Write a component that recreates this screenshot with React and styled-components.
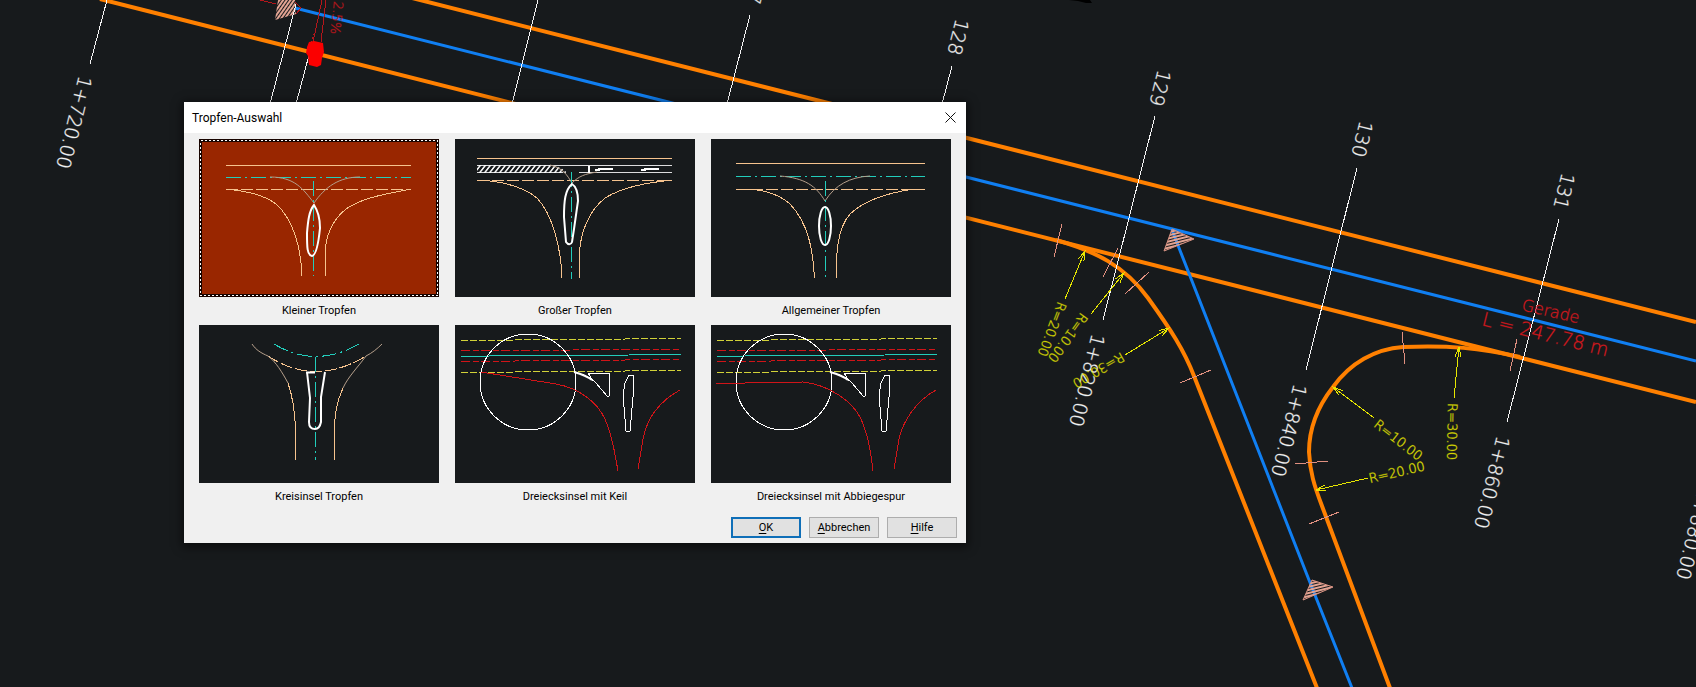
import React, { useState } from "react";
import styled, { createGlobalStyle } from "styled-components";

const GlobalStyle = createGlobalStyle`
  * {
    box-sizing: border-box;
  }
  body {
    margin: 0;
    background-color: #171a1c;
  }
`;

const Workspace = styled.main`
  position: relative;
  width: 100%;
  min-height: 100vh;
  overflow: hidden;
  background-color: #171a1c;
`;

const Plan = styled.svg`
  display: block;
  width: 100%;
  height: 100vh;

  .edge {
    fill: none;
    stroke: #ff8000;
    stroke-width: 4;
  }
  .axis {
    fill: none;
    stroke: #107ff2;
    stroke-width: 3;
  }
  .station,
  .tick,
  .radius,
  .red {
    fill: none;
    stroke-width: 1;
    shape-rendering: crispEdges;
  }
  .station {
    stroke: #f4f4f4;
  }
  .tick {
    stroke: #e09080;
  }
  .radius {
    stroke: #e6e600;
  }
  .red {
    stroke: #b3161b;
  }
`;

const PlanText = styled.text`
  font-family: "DejaVu Sans", sans-serif;
  font-weight: 200;
  font-size: ${(props) => props.$size}px;
  fill: ${(props) => props.$color};
  stroke: ${(props) => props.$color};
  stroke-width: 1;
  stroke-opacity: 0.35;
`;

const Dialog = styled.section`
  position: absolute;
  left: 184px;
  top: 102px;
  background-color: #f0f0f0;
  box-shadow: 0 2px 9px 2px rgba(0, 0, 0, 0.55);
  font-family: Roboto, sans-serif;
  color: #000;
`;

const TitleBar = styled.header`
  display: flex;
  align-items: center;
  justify-content: space-between;
  height: 31px;
  padding-left: 8px;
  background-color: #fff;

  h1 {
    margin: 0;
    font-size: 12px;
    font-weight: 400;
  }
`;

const CloseButton = styled.button`
  display: flex;
  align-items: center;
  justify-content: center;
  width: 31px;
  height: 28px;
  padding: 0;
  border: none;
  background: none;

  svg {
    width: 11px;
    height: 11px;
    stroke: #111;
  }
`;

const Choices = styled.div`
  display: grid;
  grid-template-columns: repeat(3, 240px);
  column-gap: 16px;
  padding: 6px 15px 0;
`;

const Choice = styled.button`
  display: flex;
  flex-direction: column;
  padding: 0;
  border: none;
  background: none;
  font: inherit;
  font-size: 11px;
  line-height: 28px;
  text-align: center;
  color: inherit;
  outline: none;

  span {
    width: 100%;
  }
`;

const Preview = styled.svg`
  display: block;
  width: 240px;
  height: 158px;
  background-color: ${(props) => (props.$selected ? "#992600" : "#171a1c")};
  fill: none;

  .frame {
    stroke: #180400;
    stroke-width: 3;
  }
  .dots {
    stroke: #fff;
    stroke-dasharray: 2 2;
    shape-rendering: crispEdges;
  }
  .peach {
    stroke: #f6c38e;
  }
  .soft {
    stroke: #b59f8b;
  }
  .cyan {
    stroke: #22cdbb;
  }
  .dashed {
    stroke-dasharray: 12 3;
  }
  .dashdot {
    stroke-dasharray: 15 4 2 4;
  }
  .yellow {
    stroke: #d2d238;
    stroke-dasharray: 7 2;
  }
  .red {
    stroke: #d01418;
  }
  .reddash {
    stroke: #d01418;
    stroke-dasharray: 9 3 6 2;
  }
  .white {
    stroke: #fff;
  }
  .bold {
    stroke: #fff;
    stroke-width: 2;
  }
  .peach,
  .cyan,
  .yellow,
  .red,
  .reddash,
  .white {
    shape-rendering: crispEdges;
  }
`;

const Actions = styled.footer`
  display: flex;
  justify-content: flex-end;
  gap: 8px;
  padding: 6px 9px 5px;
`;

const ActionButton = styled.button`
  width: 70px;
  height: 21px;
  padding: 0;
  border: ${(props) => (props.$primary ? "2px solid #0f6fb8" : "1px solid #adadad")};
  background-color: #e1e1e1;
  font: inherit;
  font-size: 11px;
  line-height: 17px;
  color: inherit;

  u {
    text-underline-offset: 2px;
  }
`;

const DROP_JUNCTION = (
  <>
    <path className="peach" d="M27 26.5H212" />
    <path className="cyan dashdot" d="M27 38.5H212" />
    <path className="peach dashed" d="M27 50.5H212" />
    <path className="peach" d="M27 50C45 52 64 55 77 65C95 81 102 110 103 137" />
    <path className="peach" d="M212 50C190 55 166 57 147 70C133 81 126 98 126 116V137" />
    <path className="soft" d="M71 38C96 38 104 50 115 64C126 48 140 38 161 38" />
    <path className="cyan dashdot" d="M114.500 42V137" />
    <path className="bold" d="M115 66C119 72 121 80 121 89C120 99 118 116 113 117C108 116 108 108 108 94C109 82 110 72 115 66Z" />
  </>
);

const LARGE_DROP = (
  <>
    <defs>
      <pattern id="bars" width="5" height="8" patternUnits="userSpaceOnUse" patternTransform="skewX(-38)">
        <rect width="2" height="8" fill="#f2f2f2" />
      </pattern>
    </defs>
    <path fill="url(#bars)" d="M22 26H95C103 27 109 30 112 34H22Z" />
    <path className="peach" d="M22 19.500H217" />
    <path className="white" strokeOpacity="0.85" d="M22 26.500H217M22 33.500H108M124 33.500H217" />
    <path className="peach dashed" d="M22 41.500H217" />
    <path className="peach" d="M22 41C45 42 66 46 82 59C98 76 106 110 107 139" />
    <path className="peach" d="M217 41C190 44 168 48 150 59C134 72 124 94 124.500 120V139" />
    <path className="soft" d="M95 26C108 29 112 36 117 44C124 37 130 35 142 33" />
    <path className="cyan dashdot" d="M116.500 33V140" />
    <path className="bold" d="M117 45C122 48 123 55 123 62L119 90L117 103C116 106 113 106 111 103L109 78C109 62 110 51 117 45Z" />
    <path className="bold" d="M134 27V34" />
    <path className="bold" d="M140 31H144V30H158M186 31H190V30H204" />
  </>
);

const GENERAL_DROP = (
  <>
    <path className="peach" d="M25 24.500H214" />
    <path className="cyan dashdot" d="M25 37.500H214" />
    <path className="peach dashed" d="M25 50.500H214" />
    <path className="peach" d="M25 50.500H42C57 52 69 56 79 65C97 84 102 110 103.500 139" />
    <path className="peach" d="M214 50.500H200C177 54 154 61 139 75C126 90 125 115 125.500 139" />
    <path className="soft" d="M69 37C94 39 105 47 114 62C124 46 139 38 159 37" />
    <path className="cyan dashdot" d="M114.500 42V139" />
    <ellipse className="bold" cx="114" cy="87" rx="6" ry="19" />
  </>
);

const ROUNDABOUT_DROP = (
  <>
    <path className="cyan dashdot" d="M75 19Q116 44 160 19" />
    <path className="peach dashed" d="M69 31Q116 62 167 31" />
    <path className="soft" d="M53 19C57 25 62 28 69 31C77 37 83 47 89 58" />
    <path className="soft" d="M183 19C178 24 173 28 167 31C159 42 149 52 144 63" />
    <path className="peach" d="M89 58C93 70 96 86 96.500 104V135" />
    <path className="peach" d="M144 63C138 76 135 90 135.500 108V135" />
    <path className="cyan dashdot" d="M116.500 32V135" />
    <path className="bold" d="M107 47.500H116M126 47L122 72V97C121 102 119 104 116 104C112 104 110 101 110 97L111 73L108 47" />
  </>
);

const TRIANGLE_BASE = (
  <>
    <path className="yellow" d="M6 15.500L226 13.500M6 47.500L226 45.500" />
    <path className="reddash" d="M6 25.500L226 24.500M6 36.500L226 34.500" />
    <path className="cyan" d="M6 31.500L62 30.500H122L226 29.500" />
    <circle className="white" cx="73" cy="57" r="48" />
    <path className="white" d="M119 47C128 49 137 53 141 58L152 71H154L155 48L133 48L138 56" />
    <path className="bold" d="M119 47C126 49 132 51 137 55" />
    <path className="white" d="M174 50H178L179 61L175 106H171L168 70L170 58Z" />
  </>
);

const WEDGE_ISLAND = (
  <>
    {TRIANGLE_BASE}
    <path className="red" d="M26 47L101 59C124 63 142 77 150 94C158 112 160 130 163 146" />
    <path className="red" d="M225 65C205 76 192 93 188 114L183 144" />
  </>
);

const LANE_ISLAND = (
  <>
    {TRIANGLE_BASE}
    <path className="red" d="M5 58.500L92 57C119 60 142 77 150 94C158 112 160 130 162 146" />
    <path className="red" d="M225 65C205 76 192 96 188 114L183 144" />
  </>
);

const CHOICES = [
  { name: "Kleiner Tropfen", art: DROP_JUNCTION },
  { name: "Großer Tropfen", art: LARGE_DROP },
  { name: "Allgemeiner Tropfen", art: GENERAL_DROP },
  { name: "Kreisinsel Tropfen", art: ROUNDABOUT_DROP },
  { name: "Dreiecksinsel mit Keil", art: WEDGE_ISLAND },
  { name: "Dreiecksinsel mit Abbiegespur", art: LANE_ISLAND },
];

// x, y, angle, text
const STATIONS = [
  [755, -33, 104, "127"],
  [956, 18, 104, "128"],
  [1158, 69, 104, "129"],
  [1360, 120, 104, "130"],
  [1562, 172, 104, "131"],
  [79, 75, 104, "1+720.00"],
  [1092, 333, 104, "1+820.00"],
  [1294, 383, 104, "1+840.00"],
  [1497, 435, 104, "1+860.00"],
  [1699, 486, 104, "1+880.00"],
];

const CROSS_LINES = [
  [107, 0, 90, 64],
  [296, 4, 270, 104],
  [309, 55, 296, 104],
  [538, 0, 512, 104],
  [750, 15, 727, 104],
  [952, 66, 942, 104],
  [1155, 116, 1103, 320],
  [1357, 168, 1306, 370],
  [1559, 219, 1507, 422],
];

const TICKS = [
  [1062, 224, 1054, 257],
  [1118, 248, 1103, 277],
  [1149, 272, 1125, 294],
  [1211, 370, 1180, 383],
  [1402, 332, 1405, 364],
  [1517, 339, 1510, 371],
  [1295, 464, 1328, 461],
  [1309, 524, 1339, 512],
];

// tip, tail, then the label position and angle
const RADII = [
  { tip: [1085, 251], tail: [1065, 299], at: [1058, 301], angle: 111, text: "R=20.00" },
  { tip: [1124, 273], tail: [1091, 314], at: [1081, 312], angle: 126, text: "R=10.00" },
  { tip: [1169, 328], tail: [1125, 355], at: [1121, 352], angle: 150, text: "R=30.00" },
  { tip: [1333, 387], tail: [1374, 418], at: [1373, 426], angle: 38, text: "R=10.00" },
  { tip: [1316, 490], tail: [1368, 478], at: [1370, 483], angle: -13, text: "R=20.00" },
  { tip: [1459, 347], tail: [1454, 398], at: [1448, 403], angle: 91, text: "R=30.00" },
];

const Label = ({ x, y, angle, size, color, children }) => (
  <PlanText $size={size} $color={color} transform={`translate(${x} ${y}) rotate(${angle})`}>
    {children}
  </PlanText>
);

const Radius = ({ tip, tail, at, angle, text }) => {
  const heading = (Math.atan2(tail[1] - tip[1], tail[0] - tip[0]) * 180) / Math.PI;
  return (
    <g>
      <line className="radius" x1={tip[0]} y1={tip[1]} x2={tail[0]} y2={tail[1]} />
      <path
        className="radius"
        d="M10 -3L0 0L10 3"
        transform={`translate(${tip[0]} ${tip[1]}) rotate(${heading})`}
      />
      <Label x={at[0]} y={at[1]} angle={angle} size={13} color="#e6e600">
        {text}
      </Label>
    </g>
  );
};

const SitePlan = () => (
  <Plan viewBox="0 0 1696 687" preserveAspectRatio="xMinYMin slice" role="img" aria-label="Lageplan">
    <defs>
      <pattern id="hatch" width="3" height="3" patternUnits="userSpaceOnUse" patternTransform="rotate(-14)">
        <rect width="3" height="2" fill="#e2a392" />
      </pattern>
      <pattern id="hatchSteep" width="3" height="3" patternUnits="userSpaceOnUse" patternTransform="rotate(-55)">
        <rect width="3" height="2" fill="#e2a392" />
      </pattern>
    </defs>
    <path fill="#000" d="M1069 0H1090L1092 3H1086L1078 1Z" />
    <path className="edge" d="M412 -2L1696 322" />
    <path className="edge" d="M100 -1L1696 402" />
    <path className="axis" d="M295 8L1696 361" />
    <path className="edge" d="M1056 240C1095 251 1125 266 1148 298C1171 330 1184 350 1194 376L1317 688" />
    <path
      className="edge"
      d="M1520 357C1480 348 1448 345 1403 347C1375 349 1350 363 1333 387C1315 410 1309 432 1309 452C1310 472 1314 485 1322 506L1390 688"
    />
    <path className="axis" d="M1172 230L1309 580L1352 688" />
    <path fill="url(#hatch)" stroke="#d99383" d="M1172 229L1194 239L1164 251Z" />
    <path fill="url(#hatch)" stroke="#d99383" d="M1312 580L1333 587L1303 600Z" />
    <path fill="url(#hatchSteep)" d="M278 0H295L296 14L275 20Z" />
    {CROSS_LINES.map(([x1, y1, x2, y2]) => (
      <line key={x1} className="station" x1={x1} y1={y1} x2={x2} y2={y2} />
    ))}
    {TICKS.map(([x1, y1, x2, y2]) => (
      <line key={x1} className="tick" x1={x1} y1={y1} x2={x2} y2={y2} />
    ))}
    <path className="red" d="M256 -1L276 4M322 0L313 42M326 0L321 42M295 2L301 8L296 14" />
    <path className="red" strokeDasharray="2 2" d="M317 26L311 42" />
    <path fill="#fb0000" d="M309 42L314 41L323 43L324 52L322 58L321 65L317 67L309 65L308 56L306 53L307 47Z" />
    {STATIONS.map(([x, y, angle, text]) => (
      <Label key={text} x={x} y={y} angle={angle} size={19} color="#f4f4f4">
        {text}
      </Label>
    ))}
    {RADII.map((radius) => (
      <Radius key={radius.tip[0]} {...radius} />
    ))}
    <Label x={334} y={1} angle={96} size={13} color="#c8161b">2.5%</Label>
    <Label x={1521} y={310} angle={13} size={16} color="#d8181c">Gerade</Label>
    <Label x={1481} y={325} angle={14} size={19} color="#d8181c">L = 247.78 m</Label>
  </Plan>
);

const App = () => {
  const [selected, setSelected] = useState(0);

  return (
    <Workspace>
      <GlobalStyle />
      <SitePlan />
      <Dialog role="dialog" aria-labelledby="dialog-title">
        <TitleBar>
          <h1 id="dialog-title">Tropfen-Auswahl</h1>
          <CloseButton aria-label="Schließen">
            <svg viewBox="0 0 11 11">
              <path d="M0.500 0.500L10.500 10.500M10.500 0.500L0.500 10.500" />
            </svg>
          </CloseButton>
        </TitleBar>
        <Choices>
          {CHOICES.map((choice, index) => (
            <Choice key={choice.name} aria-pressed={index === selected} onClick={() => setSelected(index)}>
              <Preview viewBox="0 0 240 158" $selected={index === selected}>
                {index === selected && (
                  <>
                    <rect className="frame" x="1.500" y="1.500" width="237" height="155" />
                    <rect className="dots" x="1.500" y="1.500" width="237" height="155" />
                  </>
                )}
                {choice.art}
              </Preview>
              <span>{choice.name}</span>
            </Choice>
          ))}
        </Choices>
        <Actions>
          <ActionButton $primary><u>O</u>K</ActionButton>
          <ActionButton><u>A</u>bbrechen</ActionButton>
          <ActionButton><u>H</u>ilfe</ActionButton>
        </Actions>
      </Dialog>
    </Workspace>
  );
};

export default App;
